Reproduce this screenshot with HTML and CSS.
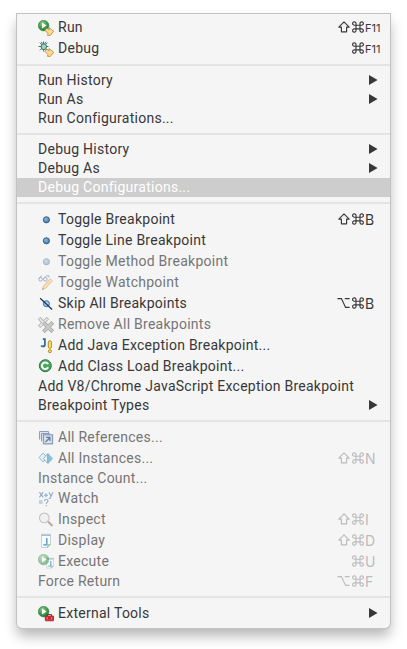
FILE: index.html
```
<!DOCTYPE html>
<html lang="en">
<head>
<meta charset="utf-8">
<title>Run menu</title>
<link rel="stylesheet" href="styles.css">
</head>
<body>
<svg class="defs" width="0" height="0">
  <defs>
    <radialGradient id="green" cx=".4" cy=".3" r=".8"><stop offset="0" stop-color="#8fcb83"/><stop offset=".55" stop-color="#3e9a4b"/><stop offset="1" stop-color="#1f6b3c"/></radialGradient>
    <radialGradient id="blue" cx=".4" cy=".35" r=".7"><stop offset="0" stop-color="#8cb9dc"/><stop offset="1" stop-color="#3f74a8"/></radialGradient>
    <symbol id="play" viewBox="0 0 16 16"><circle cx="5.6" cy="5.6" r="5.3" fill="url(#green)" stroke="#2f7d45" stroke-width=".6"/><path d="M4 2.6v6l4.6-3z" fill="#fff"/></symbol>
    <symbol id="hand" viewBox="0 0 16 16"><path d="M6.8 10.2l2.2-2 2 1.7V7.6l4.6 3.6-3.2 4.2-3-.1.6-1.8z" fill="#f9dc92" stroke="#b98333" stroke-width=".8" stroke-linejoin="round"/></symbol>
    <symbol id="dot" viewBox="0 0 16 16"><circle cx="8.4" cy="7.8" r="3.1" fill="url(#blue)" stroke="#31597f" stroke-width=".9"/></symbol>
    <symbol id="note" viewBox="0 0 16 16"><path d="M3.5 2.5h9v9l-3 3h-6z" fill="#f7fbfd" stroke="#c5d2d8"/><path d="M9.5 14.5v-3h3z" fill="#a9d8b8" stroke="#8fc8a2" stroke-width=".7"/><path d="M4 .8v2M6 .8v2M8 .8v2M10 .8v2M12 .8v2" stroke="#829bb5" stroke-width=".9"/><path d="M8.8 5v5.2q0 1.8-1.7 1.8-1 0-1.5-.7" fill="none" stroke="#70a5cf" stroke-width="1.6"/></symbol>
    <symbol id="shift" viewBox="0 0 12 12"><path d="M6 .8L11.2 6.1H8.6v4.7H3.4V6.1H.8z" fill="none" stroke="currentColor" stroke-width="1.15" stroke-linejoin="round"/></symbol>
    <symbol id="cmd" viewBox="0 0 12 12"><path d="M4 4V2.6A1.7 1.7 0 1 0 2.3 4.2h7.4A1.7 1.7 0 1 0 8 2.6v6.8A1.7 1.7 0 1 0 9.7 7.8H2.3A1.7 1.7 0 1 0 4 9.4z" fill="none" stroke="currentColor" stroke-width="1.15"/></symbol>
    <symbol id="option" viewBox="0 0 13 12"><path d="M.4 1.6h4L8.6 10.4h4M7.8 1.6h4.8" fill="none" stroke="currentColor" stroke-width="1.15"/></symbol>
    <symbol id="arrow" viewBox="0 0 9 10"><path d="M0 0L8.6 5 0 10z" fill="currentColor"/></symbol>
  </defs>
</svg>
<nav class="menu">
  <div class="item tall"><svg class="icon"><use href="#play"/><use href="#hand"/></svg><span class="label">Run</span><span class="keys"><svg class="key"><use href="#shift"/></svg><svg class="key"><use href="#cmd"/></svg><span class="letter fn">F11</span></span></div>
  <div class="item tall"><svg class="icon" viewBox="0 0 16 16"><path d="M5.5.5v10M.5 5.5h10M1.8 1.6l7.5 7.8M9.5 1.6L1.8 9.4M3.4.8l1 2M7.8.8l-1 2" stroke="#356b6b" stroke-width=".9"/><ellipse cx="5.8" cy="5.7" rx="2.7" ry="3" fill="#a8cfb5" stroke="#356f78"/><use href="#hand"/></svg><span class="label">Debug</span><span class="keys"><svg class="key"><use href="#cmd"/></svg><span class="letter fn">F11</span></span></div>
  <hr class="rule">
  <div class="item"><span class="label">Run History</span><svg class="arrow"><use href="#arrow"/></svg></div>
  <div class="item"><span class="label">Run As</span><svg class="arrow"><use href="#arrow"/></svg></div>
  <div class="item"><span class="label">Run Configurations...</span></div>
  <hr class="rule">
  <div class="item"><span class="label">Debug History</span><svg class="arrow"><use href="#arrow"/></svg></div>
  <div class="item"><span class="label">Debug As</span><svg class="arrow"><use href="#arrow"/></svg></div>
  <div class="item selected"><span class="label">Debug Configurations...</span></div>
  <hr class="rule">
  <div class="item tall"><svg class="icon"><use href="#dot"/></svg><span class="label">Toggle Breakpoint</span><span class="keys"><svg class="key"><use href="#shift"/></svg><svg class="key"><use href="#cmd"/></svg><span class="letter">B</span></span></div>
  <div class="item tall"><svg class="icon"><use href="#dot"/></svg><span class="label">Toggle Line Breakpoint</span></div>
  <div class="item tall disabled"><svg class="icon faded"><use href="#dot"/></svg><span class="label">Toggle Method Breakpoint</span></div>
  <div class="item tall disabled"><svg class="icon" viewBox="0 0 16 16"><g fill="none" stroke="#9fb2c4"><circle cx="2.6" cy="4.3" r="1.8"/><circle cx="7.3" cy="4.3" r="1.8"/><path d="M1 3.8L3.5.6M6.2 3L8.6.8l2.6.2-.8 1.3"/></g><path d="M4.4 14.7l1-3.8 6.8-7.2 2.2 2.2-6.7 7.3z" fill="#f7dcb7" stroke="#e0bd92" stroke-width=".8"/><path d="M4.4 14.7l.4-1.5 1 .9z" fill="#987a60"/></svg><span class="label">Toggle Watchpoint</span></div>
  <div class="item tall"><svg class="icon" viewBox="0 0 16 16"><circle cx="8.4" cy="7.7" r="3" fill="#a6d0e9" stroke="#2e6c9e"/><path d="M2.2 2.2l11.9 11.3" stroke="#19366f" stroke-width="1.3"/></svg><span class="label">Skip All Breakpoints</span><span class="keys"><svg class="key opt"><use href="#option"/></svg><svg class="key"><use href="#cmd"/></svg><span class="letter">B</span></span></div>
  <div class="item tall disabled"><svg class="icon" viewBox="0 0 16 16"><g stroke-linecap="square"><path d="M2.3 2.3l6.4 6.4M8.7 2.3L2.3 8.7" stroke="#b0b0b0" stroke-width="3.4"/><path d="M2.3 2.3l6.4 6.4M8.7 2.3L2.3 8.7" stroke="#e8e8e8" stroke-width="1.9"/><path d="M6.8 6.8l6.6 6.6M13.4 6.8l-6.6 6.6" stroke="#a5a5a5" stroke-width="3.8"/><path d="M6.8 6.8l6.6 6.6M13.4 6.8l-6.6 6.6" stroke="#c9c9c9" stroke-width="2.4"/></g></svg><span class="label">Remove All Breakpoints</span></div>
  <div class="item tall"><svg class="icon" viewBox="0 0 16 16"><path d="M6.9.8v5.6q0 2-1.9 2-1.2 0-1.8-.9M4.8 1.1h2.9" fill="none" stroke="#2d689c" stroke-width="1.7"/><rect x="10.3" y="2.7" width="3.1" height="7.6" rx="1.5" fill="#ffe35f" stroke="#b58a22"/><circle cx="11.9" cy="13.2" r="1.5" fill="#ffe35f" stroke="#b58a22"/></svg><span class="label">Add Java Exception Breakpoint...</span></div>
  <div class="item tall"><svg class="icon" viewBox="0 0 16 16"><circle cx="7.3" cy="6.7" r="6" fill="#4ba75c" stroke="#287a43"/><path d="M10.1 5.1A3.3 3.3 0 1 0 10.1 8.3" fill="none" stroke="#fff" stroke-width="2"/></svg><span class="label">Add Class Load Breakpoint...</span></div>
  <div class="item"><span class="label">Add V8/Chrome JavaScript Exception Breakpoint</span></div>
  <div class="item"><span class="label">Breakpoint Types</span><svg class="arrow"><use href="#arrow"/></svg></div>
  <hr class="rule">
  <div class="item tall disabled"><svg class="icon" viewBox="0 0 16 16"><g fill="#dce4ee" stroke="#8e9eb9"><path d="M1.5 9.5v-8h9v3M3.5 11.5v-8h8v2"/><rect x="5.5" y="4.8" width="9" height="9" stroke-width="1.3"/></g><path d="M7.5 12l4-4M8.2 7.4h3.7v3.7" fill="none" stroke="#607d9e" stroke-width="1.3"/></svg><span class="label">All References...</span></div>
  <div class="item tall disabled"><svg class="icon" viewBox="0 0 16 16"><path d="M5.2 2L1 6.5 5.2 11 9 6.5z" fill="#e5f2f8" stroke="#8cb8cc"/><path d="M9.5 2.8v9.4L5.4 7.5z" fill="#eaf5f9" stroke="#8cb8cc"/><path d="M10 2.5l4.7 5L10 12.5z" fill="#8fc2d9" stroke="#7caec5" stroke-width=".6"/></svg><span class="label">All Instances...</span><span class="keys"><svg class="key"><use href="#shift"/></svg><svg class="key"><use href="#cmd"/></svg><span class="letter">N</span></span></div>
  <div class="item disabled"><span class="label">Instance Count...</span></div>
  <div class="item tall disabled"><svg class="icon" viewBox="0 0 16 16"><path d="M1.4 1.2l3.8 5.2M5.2 1.2L1.4 6.4M6 4.2h4M8 2.2v4M11 1.2l2 4M15 1.2l-3 6.3h-1.3M1 10h3.6M1 12h3.6M6.5 10q0-1.5 1.8-1.5t1.6 1.7c0 1.2-1.6 1.2-1.6 2.7M8.3 14v1.2" fill="none" stroke="#93adc8" stroke-width="1.15"/></svg><span class="label">Watch</span></div>
  <div class="item tall disabled"><svg class="icon" viewBox="0 0 16 16"><path d="M10 9.5l4.5 4.5" stroke="#b9a99a" stroke-width="2"/><circle cx="6.3" cy="5.9" r="4.8" fill="#f1f1f2" stroke="#c5c3bf" stroke-width="1.1"/></svg><span class="label">Inspect</span><span class="keys"><svg class="key"><use href="#shift"/></svg><svg class="key"><use href="#cmd"/></svg><span class="letter">I</span></span></div>
  <div class="item tall disabled"><svg class="icon"><use href="#note"/></svg><span class="label">Display</span><span class="keys"><svg class="key"><use href="#shift"/></svg><svg class="key"><use href="#cmd"/></svg><span class="letter">D</span></span></div>
  <div class="item tall disabled"><svg class="icon" viewBox="0 0 16 16"><use href="#note" x="6.2" y="3" width="12" height="12.5"/><use href="#play" class="pale"/></svg><span class="label">Execute</span><span class="keys"><svg class="key"><use href="#cmd"/></svg><span class="letter">U</span></span></div>
  <div class="item disabled"><span class="label">Force Return</span><span class="keys"><svg class="key opt"><use href="#option"/></svg><svg class="key"><use href="#cmd"/></svg><span class="letter">F</span></span></div>
  <hr class="rule">
  <div class="item tall"><svg class="icon" viewBox="0 0 16 16"><use href="#play"/><path d="M9.5 10V8.6h4V10" fill="none" stroke="#a3202b"/><rect x="7.3" y="10" width="8.3" height="4.8" rx=".5" fill="#d83a42" stroke="#a81826" stroke-width=".8"/><path d="M7.5 12.1h8" stroke="#8f1722" stroke-width=".8"/><path d="M9.2 11.4v1.4M13.6 11.4v1.4" stroke="#f3b0ad"/></svg><span class="label">External Tools</span><svg class="arrow"><use href="#arrow"/></svg></div>
</nav>
</body>
</html>
```
FILE: styles.css
```
* { box-sizing: border-box; }
body {
  margin: 0;
  padding: 14px 17px 0;
  height: 649px;
  overflow: hidden;
  background: #fff;
  font: 14px/19px Roboto, "Liberation Sans", sans-serif;
  color: #383838;
}
.defs { position: absolute; }
.menu {
  width: 373px;
  height: 614px;
  padding-top: 3px;
  background: #f5f5f5;
  border-radius: 0 0 5px 5px;
  box-shadow: 0 0 0 1px #c2c2c2, 0 8px 13px rgba(0, 0, 0, .29);
}
.item {
  display: flex;
  align-items: center;
  height: 19px;
  padding-left: 21px;
}
.item.tall { height: 21px; }
.label { white-space: nowrap; letter-spacing: .26px; }
.icon { width: 16px; height: 16px; margin-right: 4px; flex: none; }
.faded { opacity: .4; }
.pale { opacity: .5; }
.disabled { color: #757575; }
.selected { background: #cdcdcd; color: #fff; }
.rule { height: 2px; margin: 5px 0; border: 0; background: #e4e4e4; }
.keys { display: flex; align-items: center; margin-left: auto; padding-bottom: 1px; }
.disabled .keys { color: #bcbcbc; }
.key { width: 12px; height: 12px; margin-right: 2px; }
.key:nth-last-child(2) { margin-right: 1px; }
.opt { width: 13px; }
.letter { width: 25px; font-family: Inter, sans-serif; }
.fn { font-size: 11px; padding-top: 2px; }
.arrow { width: 9px; height: 10px; margin: 0 12px 1px auto; }
```
